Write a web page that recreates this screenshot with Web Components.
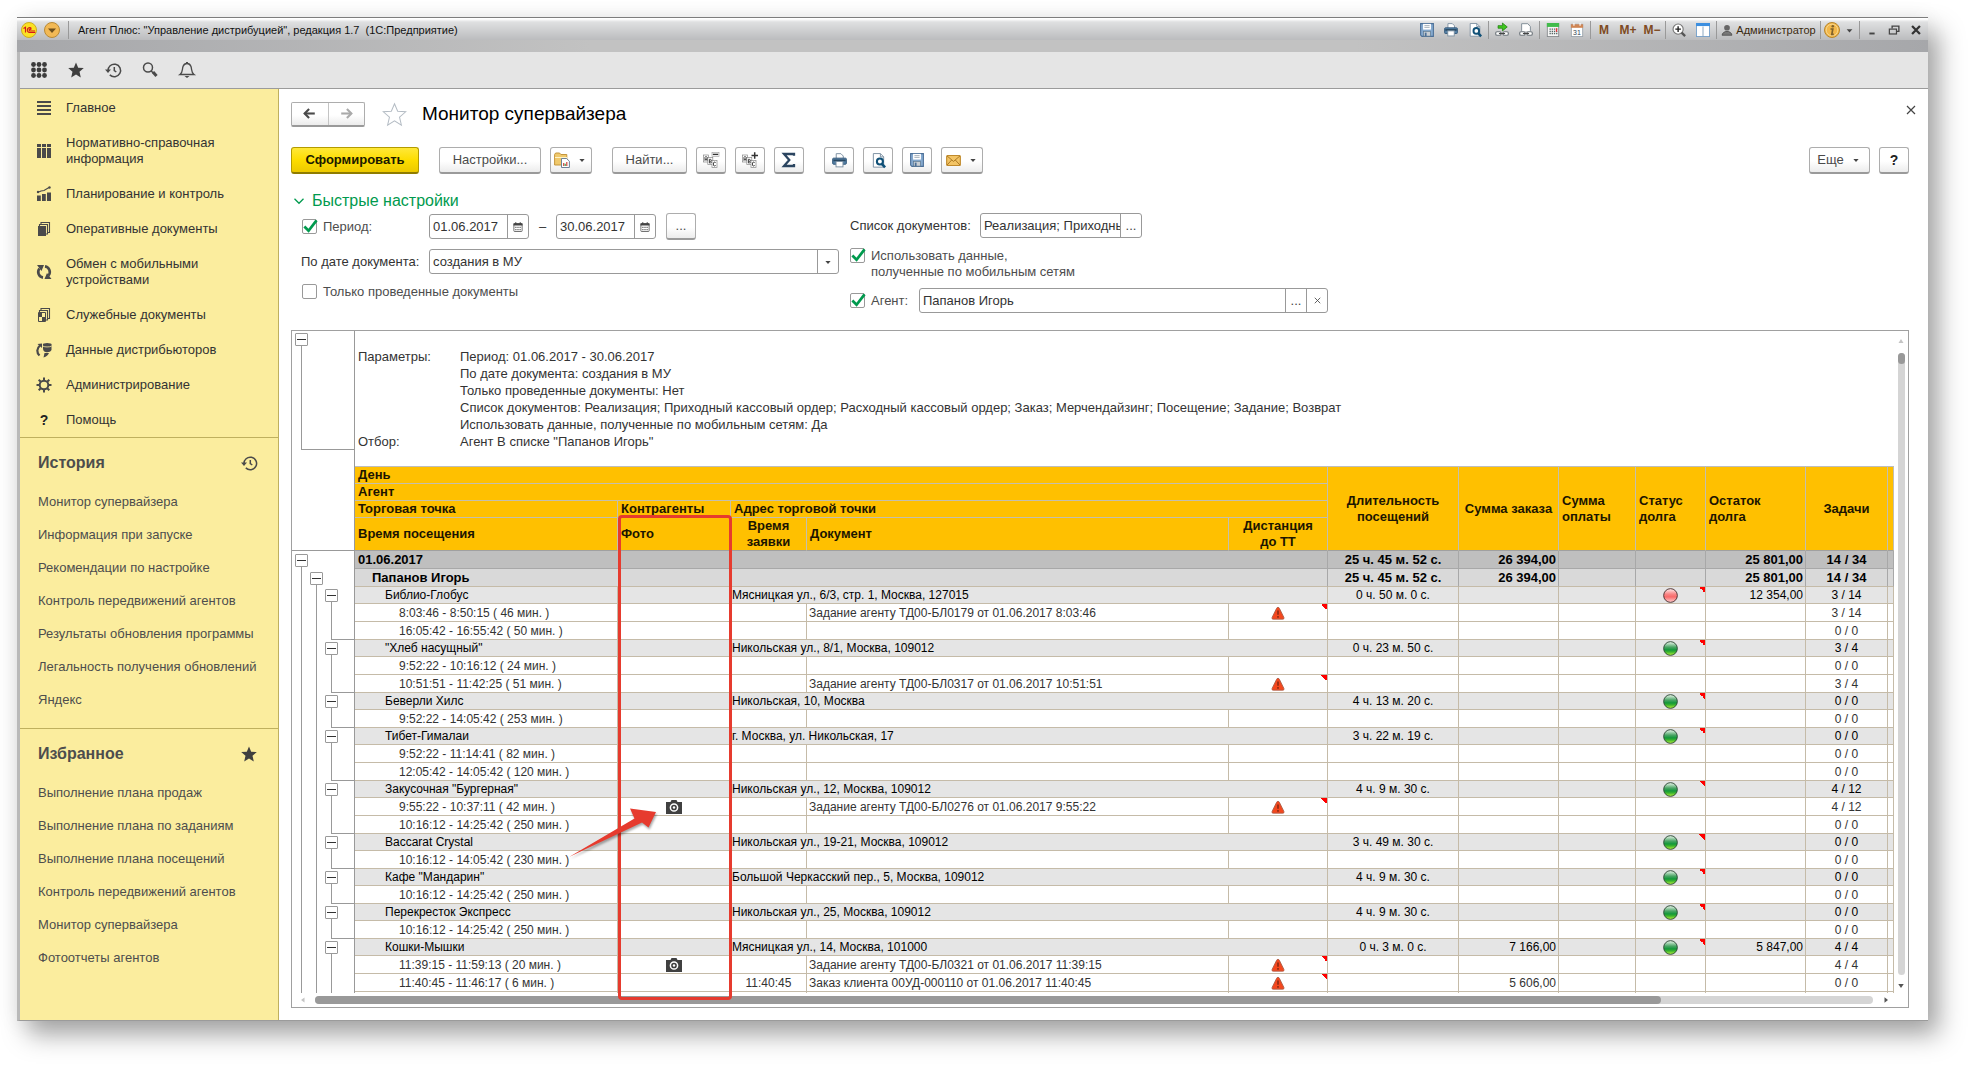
<!DOCTYPE html>
<html lang="ru">
<head>
<meta charset="utf-8">
<title>Монитор супервайзера</title>
<style>
html, body { height: 100%; margin: 0; }
body { background: #fff; font: 13px/16px "Liberation Sans", Arial, sans-serif; color: #333; box-sizing: border-box; padding: 17px 48px 48px 17px; overflow: hidden; }
</style>
</head>
<body>
<app-window></app-window>
<script>
const BASE = `*{box-sizing:border-box} :host{display:block} button,input,select{font:inherit;color:inherit;margin:0} button{padding:0;background:none;border:0;cursor:pointer} a{color:inherit;text-decoration:none} svg{display:block}`;

function define(name, css, html, setup) {
  const tpl = document.createElement('template');
  customElements.define(name, class extends HTMLElement {
    constructor() {
      super();
      this.attachShadow({ mode: 'open' });
    }
    connectedCallback() {
      if (this.shadowRoot.firstChild) return;
      tpl.innerHTML = `<style>${BASE}${css}</style>` + (typeof html === 'function' ? html(this) : html);
      this.shadowRoot.append(tpl.content.cloneNode(true));
      if (setup) setup(this, this.shadowRoot);
    }
  });
}

const G = '#4a4a4a';
const STAR = 'M8 .5l2.2 5.2 5.6.4-4.3 3.7 1.3 5.6L8 12.4l-4.8 3 1.3-5.6L.2 6.1l5.6-.4z';
const HISTORY = `<g fill="none" stroke="${G}" stroke-width="1.5"><path d="M3 9a6.3 6.3 0 1 1 1.8 3.9"/><path d="M9.3 5v3.6l2 1.4"/></g><path d="M0 7.5h6L3 11z" fill="${G}"/>`;
const PRINTER = `<path d="M4.5 6V.7h5L12 3.2V6" fill="#fff" stroke="#7a8ea0"/><rect x=".7" y="5.5" width="14.6" height="6.5" rx="1" fill="#5580a6" stroke="#2f5577"/><rect x="1.5" y="7" width="13" height="1.8" fill="#27465f"/><rect x="4.3" y="9" width="7.4" height="5.8" fill="#fff" stroke="#7a8ea0"/>`;
const CHAIN = y => `<g fill="#fff" stroke="#6f777d" stroke-width="1.3"><rect x=".8" y="${y}" width="6" height="4" rx="1.5"/><rect x="9.2" y="${y}" width="6" height="4" rx="1.5"/></g><path d="M4.5 ${y + 2}h7" stroke="#444" stroke-width="1.3"/>`;
const PAGES = `<path d="M5 3.5V1.5h8.5v10H12M3.5 5V3.5h8V13H10" fill="none" stroke="${G}" stroke-width="1.1"/>`;
const ABC = `<g fill="#fff" stroke="#888" stroke-width=".7"><rect x=".5" y="3" width="5" height="7"/><rect x="4.8" y="5.500" width="5" height="7"/><rect x="9" y="8.500" width="5" height="7"/></g><path d="M2 8.800V5.300l1-1 1 1v3.500M2 7.300h2M6.400 7.300v3.700h1.300l.8-.9-.8-.9.8-.9-.8-1zM6.400 9.200h1.300M12.600 10.800l-.5-.7h-1l-.6.8v2.300l.6.8h1l.5-.7" fill="none" stroke="#333" stroke-width=".9"/>`;
const ICONS = {
  grid: [0,1,2].map(r => [0,1,2].map(c => `<circle cx="${2.5 + c * 5.5}" cy="${2.5 + r * 5.5}" r="2.4" fill="#3c3c3c"/>`).join('')).join(''),
  star: `<path d="${STAR}" fill="#3f3f3f"/>`,
  starline: `<path d="${STAR}" fill="#fff" stroke="#b4bcc4" stroke-width=".7"/>`,
  history: HISTORY,
  search: `<circle cx="6" cy="5.5" r="4.5" fill="none" stroke="${G}" stroke-width="1.5"/><path d="M11 10l3.500 4" stroke="${G}" stroke-width="3"/><path d="M9 8.7l3 3" stroke="${G}" stroke-width="1.5"/>`,
  bell: `<path d="M1 12.5c3-2 2-5 3-8C4.7 2.5 6 1.5 8 1.5s3.3 1 4 3c1 3 0 6 3 8z" fill="none" stroke="${G}" stroke-width="1.3"/><path d="M7 0h2v2H7zM5.5 14h5L8 16z" fill="${G}"/>`,
  lines: `<path d="M1 2h14M1 6h14M1 10h14M1 14h14" stroke="${G}" stroke-width="2"/>`,
  books: `<path d="M1 1h4v3H1zM6 1h4v3H6zM11 1h4v3h-4zM1 5h4v10H1zM6 5h4v10H6zM11 5h4v10h-4z" fill="${G}"/>`,
  chart: `<path d="M1 9.5h3.8V15H1zM6 8h3.8v7H6zM11 6.5h4V15h-4z" fill="${G}"/><path d="M1.5 6.5L5 5l3-.5 5-3" fill="none" stroke="${G}" stroke-width="1.2"/><circle cx="2" cy="6" r="1.2" fill="${G}"/><circle cx="13.5" cy="1.5" r="1.2" fill="${G}"/>`,
  pages: PAGES + `<path d="M2 5h8v10H2z" fill="${G}"/>`,
  sync: `<g fill="none" stroke="${G}" stroke-width="2.6"><path d="M7 13.6A5.6 5.6 0 0 1 3.5 4.5M9 2.4a5.6 5.6 0 0 1 3.5 9.1"/></g><path d="M1 1h7L5.5 7zM15.5 15h-7l2.5-6z" fill="${G}"/>`,
  service: PAGES + `<path d="M2.5 5.5h7v9h-7z" fill="#fbed9e" stroke="${G}"/><path d="M3 6h3v4H3zM6 10h3v4H6z" fill="${G}"/>`,
  data: `<path d="M7 2.5h8.5V8c-1 2-3.5 2.5-6 2C7.5 9.5 7 8 7 6z" fill="${G}"/><ellipse cx="11.2" cy="2.500" rx="4.300" ry="1.500" fill="${G}"/><path d="M7 4.2c2 1 6 1 8.5 0" stroke="#fbed9e" fill="none" stroke-width=".8"/><path d="M4 3.5C.5 6.5.5 10.5 3.5 13.5" fill="none" stroke="${G}" stroke-width="2.2"/><path d="M1.5 2l4.500-.5V6zM7.500 15.500l1-4.500h4.500c-1 2-2.500 3.500-5.500 4.500z" fill="${G}"/>`,
  gear: `<circle cx="8" cy="8" r="4.300" fill="none" stroke="${G}" stroke-width="2"/><path d="M8 .5v3M8 12.5v3M.5 8h3M12.5 8h3M2.7 2.7l2.100 2.100M11.2 11.2l2.100 2.100M2.7 13.300l2.100-2.100M11.2 4.800l2.100-2.100" stroke="${G}" stroke-width="2"/>`,
  save: `<path d="M.7.7h14.6v14.6H2.2L.7 13.8z" fill="#85a9cf" stroke="#4b6f97" stroke-width="1.2"/><rect x="3.5" y="1" width="9" height="6.5" fill="#fff"/><path d="M5 3h6M5 5h6" stroke="#9aa6b0"/><rect x="4" y="9.5" width="8" height="5.5" fill="#c9cfd4" stroke="#5d7890" stroke-width=".8"/><rect x="5.5" y="11" width="2" height="4" fill="#4b6f97"/>`,
  print: PRINTER,
  preview: `<path d="M2.5.6h7.5l3.5 3.5v11h-11z" fill="#fff" stroke="#7a8ea0"/><path d="M10 .6v3.5h3.5" fill="none" stroke="#7a8ea0"/><circle cx="9.5" cy="9" r="3.2" fill="#fff" stroke="#0f5077" stroke-width="2.2"/><path d="M11.8 11.8l3.2 3.5" stroke="#0f5077" stroke-width="2.8"/>`,
  link: CHAIN(10) + `<path d="M3.500 3h5V0l5.500 4.500L8.500 9V6h-5z" fill="#3fc51f" stroke="#187a08" stroke-width=".8"/>`,
  linkdoc: `<path d="M3 9V.8h7L13 4v5" fill="#fff" stroke="#77858f"/>` + CHAIN(10),
  calc: `<rect x="1.5" y=".5" width="13" height="15" fill="#f5f5f5" stroke="#85898c"/><rect x="1" y="0" width="14" height="4.5" fill="#41bb4b"/><path d="M4 7h9M4 9.5h9M4 12h9" stroke="#566" stroke-width="1.5" stroke-dasharray="1.5 1"/><path d="M12 6v4" stroke="#e33" stroke-width="1.5"/>`,
  calendar: `<rect x="1.5" y="1.5" width="13" height="14" fill="#fff" stroke="#9aa3ab"/><path d="M1 1.5h14v4H1z" fill="#cf8554"/><path d="M4.5 0v3M11.5 0v3" stroke="#fff" stroke-width="1.3"/><text x="8" y="13.5" font-family="Liberation Sans" font-size="8" text-anchor="middle" fill="#345">31</text>`,
  zoomin: `<circle cx="7" cy="7" r="5.800" fill="#fff" stroke="#777" stroke-width="1.300"/><path d="M7 3.8v6.4M3.8 7h6.4" stroke="#222" stroke-width="1.6"/><path d="M11 11l4 4" stroke="#555" stroke-width="2.6"/>`,
  panels: `<rect x=".5" y=".5" width="15" height="15" fill="#fff" stroke="#6f9cc8"/><rect width="16" height="3.5" fill="#3c8fe0"/><path d="M8 4v11.5" stroke="#7f9db9"/>`,
  user: `<circle cx="8" cy="5" r="3.8" fill="#666"/><path d="M1.5 15c0-3 2.5-4 4.5-5h4c2 1 4.5 2 4.5 5z" fill="#777" stroke="#444"/>`,
  info: `<circle cx="8" cy="8" r="7.5" fill="#f2b84b" stroke="#b8862c"/><circle cx="8" cy="8" r="5.8" fill="none" stroke="#fadc98" stroke-width=".8"/><circle cx="8.8" cy="4.3" r="1.3" fill="#80622c"/><path d="M6.5 7h2.3l-1 5.3h2" stroke="#80622c" stroke-width="1.7" fill="none"/>`,
  min: `<path d="M5 12h6" stroke="#444" stroke-width="2.2"/>`,
  restore: `<path d="M5.5 6V2.8h9v7h-2.5" fill="none" stroke="#444" stroke-width="1.8"/><rect x="1.8" y="6.8" width="9.5" height="6.5" fill="none" stroke="#444" stroke-width="1.6"/>`,
  close: `<path d="M3.5 3.5l9 9M12.5 3.5l-9 9" stroke="#333" stroke-width="2.6"/>`,
  thinclose: `<path d="M4 4l8 8M12 4l-8 8" stroke="#444" stroke-width="1.2"/>`,
  tri: `<path d="M4.5 6.5h7L8 10.5z" fill="#444"/>`,
  logo: `<circle cx="8" cy="8" r="7.5" fill="#fbe122" stroke="#cdae20"/><path d="M2.5 6.5L4.5 5.3V10.5M10.5 6.5C9 4.7 6.3 5.8 6.3 8c0 2 1.7 2.6 3 2.5h5M10.3 7.6c-1-.9-2.2-.5-2.2.4 0 .7.6 1 1.4 1h4.5" stroke="#d3171c" fill="none" stroke-width="1.1"/>`,
  menu: `<circle cx="8" cy="8" r="7.5" fill="#f2b955" stroke="#b98a35"/><path d="M4 6.5h8L8 11z" fill="#6d4f1d"/>`,
  back: `<path d="M2 8h12.5" stroke="#4a4a4a" stroke-width="2.6"/><path d="M7.5 2.5L2 8l5.500 5.500" fill="none" stroke="#4a4a4a" stroke-width="2.6"/>`,
  forward: `<path d="M1.5 8H14" stroke="#aaa" stroke-width="2.6"/><path d="M8.5 2.5L14 8l-5.500 5.500" fill="none" stroke="#aaa" stroke-width="2.6"/>`,
  folder: `<path d="M.6 13V2.5l1-1.5h4l1.2 1.5h6V13z" fill="#f0c96c" stroke="#c5963c"/><path d="M1 5.5h12" stroke="#fff3c8"/><path d="M7.5 6.5h5l2.9 2.7v6.3H7.5z" fill="#fff" stroke="#6d8297"/><path d="M9.7 14v-3M12.8 14v-4" stroke="#d2483f" stroke-width="1.2"/><path d="M11.2 14v-2.2" stroke="#3a9d4b" stroke-width="1.2"/>`,
  abcminus: ABC + `<rect x="9" y=".5" width="7" height="3.800" fill="#fff" stroke="#999" stroke-width=".6"/><path d="M9.800 2.400h5.400" stroke="#333" stroke-width="1.400"/>`,
  abcplus: ABC + `<path d="M9.500 3.500h6.500M12.700.3v6.400" stroke="#333" stroke-width="1.500"/>`,
  sigma: `<path d="M13 3.8V2H3l5.3 6L3 14h10v-2" fill="none" stroke="#2b4560" stroke-width="2.3"/>`,
  mail: `<rect x=".7" y="2.7" width="14.6" height="10.6" rx="1" fill="#f3c465" stroke="#c08a2c" stroke-width="1.2"/><path d="M1 3l7 6 7-6M1 13l5-5.5M15 13l-5-5.5" fill="none" stroke="#a87420"/>`,
  chevron: `<path d="M2 5l6 6 6-6" fill="none" stroke="#009a4e" stroke-width="1.7"/>`,
  cal: `<rect x="2.5" y="3.5" width="11" height="10.5" rx="1" fill="#fff" stroke="#444"/><path d="M2 3h12v3H2z" fill="#444"/><path d="M5 1.5v3M11 1.5v3" stroke="#444" stroke-width="1.5"/><path d="M4.5 8.5h7.5M4.5 11.5h7.5" stroke="#444" stroke-width="1.4" stroke-dasharray="1.4 1.4"/>`,
  camera: `<path d="M0 3h4.5l1-2h5l1 2H16v12H0z" fill="#404040"/><circle cx="8" cy="8.5" r="3.6" fill="none" stroke="#fff" stroke-width="1.5"/><circle cx="8" cy="8.5" r="1.2" fill="#fff"/>`,
  warn: `<path d="M8 1.5c.8 0 1.2.5 1.6 1.2L14.7 13c.6 1.2 0 2-1.2 2h-11c-1.2 0-1.8-.8-1.2-2L6.4 2.7C6.800 2 7.200 1.500 8 1.500z" fill="#f5471d" stroke="#a85a45" stroke-width="1"/><path d="M8 5v5M8 11.500v2" stroke="#7a2412" stroke-width="1.600"/>`,
  green: `<defs><linearGradient id="g" x2="0" y2="1"><stop offset="0" stop-color="#f2faf3"/><stop offset=".4" stop-color="#4aa565"/><stop offset=".6" stop-color="#12983a"/><stop offset=".75" stop-color="#3ab22e"/><stop offset="1" stop-color="#b8f53a"/></linearGradient></defs><circle cx="8" cy="8" r="7.300" fill="url(#g)" stroke="#2c4a34"/>`,
  red: `<defs><linearGradient id="r" x2="0" y2="1"><stop offset="0" stop-color="#fff0f0"/><stop offset=".4" stop-color="#f98585"/><stop offset=".6" stop-color="#f86a6a"/><stop offset="1" stop-color="#ffd0d0"/></linearGradient></defs><circle cx="8" cy="8" r="7.300" fill="url(#r)" stroke="#4a3030"/>`,
  check: `<path d="M2.5 8L7 12.5 15.5 1.5" fill="none" stroke="#009a4e" stroke-width="2.9"/>`,
  up: `<path d="M3 12l5-8 5 8z" fill="#c4c4c4"/>`, down: `<path d="M2.5 4h11L8 12z" fill="#555"/>`,
  left: `<path d="M11 3v10L4 8z" fill="#c4c4c4"/>`, right: `<path d="M5 2.5v11L12 8z" fill="#555"/>`
};

define('ui-icon', `:host{display:block;flex:none} svg{overflow:visible}`, el => {
  const s = el.getAttribute('size') || 16;
  return `<svg width="${s}" height="${s}" viewBox="0 0 16 16" aria-hidden="true">${ICONS[el.getAttribute('name')]}</svg>`;
});
const icon = (n, s = 16) => `<ui-icon name="${n}" size="${s}"></ui-icon>`;

define('tool-button', `
  :host{display:block;flex:none}
  button{display:flex;align-items:center;justify-content:center;gap:6px;width:100%;height:27px;border:1px solid #adadad;border-bottom:2px solid #9a9a9a;border-radius:3px;background:linear-gradient(#fff 55%,#ececec);color:#4a4a4a}
  :host([primary]) button{background:linear-gradient(#ffe838,#fddd00 50%,#ecc900);border-color:#b39b00;border-bottom-color:#8f7c00;color:#1a1a00;font-weight:bold}
`, el => `<button type="button" aria-label="${el.getAttribute('label') || ''}"><slot></slot>${el.hasAttribute('menu') ? icon('tri', 12) : ''}</button>`, (el, root) => {
  if (!el.hasAttribute('label')) root.querySelector('button').removeAttribute('aria-label');
});

define('check-box', `
  label{display:flex;align-items:flex-start;gap:6px;color:#4d4d4d}
  .box{display:grid;flex:none;width:15px;height:15px}
  .box>*{grid-area:1/1}
  input{appearance:none;width:15px;height:15px;border:1px solid #999;border-radius:2px;background:#fff}
  ui-icon{display:none;pointer-events:none}
  input:checked+ui-icon{display:block}
`, el => `<label><span class="box"><input type="checkbox" ${el.hasAttribute('checked') ? 'checked' : ''}>${icon('check', 15)}</span><span><slot></slot></span></label>`);

define('text-field', `
  :host{display:flex;align-items:center;min-width:0}
  label{flex:none}
  label:empty{display:none}
  .f{display:flex;flex:1;min-width:0;height:25px;border:1px solid #999;border-radius:3px;background:#fff;overflow:hidden}
  input,select{flex:1;min-width:0;width:0;border:0;outline:0;background:none;padding:0 0 0 3px;height:23px;color:#333;appearance:none}
  button,.arrow{flex:none;width:21px;border-left:1px solid #999;display:flex;align-items:center;justify-content:center;color:#444}
  .sel{display:grid;flex:1}
  .sel>*{grid-area:1/1}
  .sel select{width:100%}
  .arrow{justify-self:end;pointer-events:none}
`, el => {
  const v = el.getAttribute('value'), l = el.getAttribute('label') || '', a = el.getAttribute('aria') || l;
  const core = el.getAttribute('type') === 'select'
    ? `<div class="sel"><select id="c" aria-label="${a}"><option>${v}</option></select><span class="arrow">${icon('tri', 12)}</span></div>`
    : `<input id="c" type="text" value="${v}" aria-label="${a}">`;
  const btns = (el.getAttribute('buttons') || '').split(' ').filter(Boolean).map(b =>
    b === 'cal' ? `<button type="button" aria-label="Календарь">${icon('cal', 12)}</button>` :
    b === 'x' ? `<button type="button" aria-label="Очистить">${icon('thinclose', 11)}</button>` :
    `<button type="button" aria-label="Выбрать">...</button>`).join('');
  return `<label for="c" style="width:${el.getAttribute('label-width') || 0}px">${l}</label><div class="f">${core}${btns}</div>`;
});

define('title-bar', `
  :host{background:linear-gradient(90deg,#a6a7aa,#c2c2c2 30%,#c2c2c2 70%,#a6a7aa);border-top:1px solid #7d7d7d}
  .bar{display:flex;align-items:center;height:22px;padding:2px 1px 0 4px;background:linear-gradient(#fff 0,#fff 1px,#dfe0e1 4px,#bbbcbe)}
  .under{height:12px}
  button{display:flex;align-items:center;justify-content:center;height:18px}
  .t{width:24px} .w{width:22px}
  .sep{width:1px;height:18px;margin:0 1px;background:#999;align-self:flex-start}
  .left{display:flex;align-items:center;gap:7px}
  .title{flex:1;padding-left:8px;font-size:11px;line-height:18px;color:#111;white-space:nowrap}
  .right{display:flex;align-items:center}
  .m{font-weight:bold;color:#7e4a22;font-size:12px}
  .user{width:101px;gap:3px;font-size:11px;line-height:18px;color:#3a2a10}
  .info{width:36px;gap:3px}
`, () => {
  const t = n => `<button type="button" class="t" aria-label="${n}">${icon(n, 14)}</button>`, s = '<span class="sep"></span>';
  return `<div class="bar"><div class="left"><button type="button" aria-label="1С">${icon('logo', 16)}</button><button type="button" aria-label="Меню">${icon('menu', 16)}</button><span class="sep"></span></div>
  <div class="title">Агент Плюс: "Управление дистрибуцией", редакция 1.7&nbsp; (1С:Предприятие)</div>
  <div class="right">${t('save')}${t('print')}${t('preview')}${s}${t('link')}${t('linkdoc')}${s}${t('calc')}${t('calendar')}${s}
  <button type="button" class="t m">M</button><button type="button" class="t m">M+</button><button type="button" class="t m">M−</button>${s}${t('zoomin')}${t('panels')}${s}
  <button type="button" class="user">${icon('user', 12)}Администратор</button>${s}<button type="button" class="info" aria-label="Справка">${icon('info', 16)}${icon('tri', 13)}</button>${s}
  <button type="button" class="w" aria-label="Свернуть">${icon('min', 14)}</button><button type="button" class="w" aria-label="Восстановить">${icon('restore', 12)}</button><button type="button" class="w" aria-label="Закрыть">${icon('close', 14)}</button></div></div><div class="under"></div>`;
});

define('quick-bar', `
  :host{display:flex;align-items:center;height:37px;background:#e5e5e5;border-bottom:1px solid #9b9b9b}
  button{display:flex;align-items:center;justify-content:center;width:37px;height:30px}
`, () => ['grid', 'star', 'history', 'search', 'bell'].map(n => `<button type="button" aria-label="${n}">${icon(n, 16)}</button>`).join(''));

const MENU = [['lines', 'Главное'], ['books', 'Нормативно-справочная информация'], ['chart', 'Планирование и контроль'], ['pages', 'Оперативные документы'], ['sync', 'Обмен с мобильными устройствами'], ['service', 'Служебные документы'], ['data', 'Данные дистрибьюторов'], ['gear', 'Администрирование'], ['', 'Помощь']];

define('side-menu', `
  :host{padding-top:1px;border-bottom:1px solid #bfb05e}
  a{display:flex;align-items:center;padding:10px 40px 9px 16px;gap:14px}
  .q{flex:none;width:16px;text-align:center;font-weight:bold;font-size:14px;color:#222}
`, () => `<nav>` + MENU.map(([n, t]) => `<a href="#">${n ? icon(n, 16) : '<span class="q">?</span>'}<span>${t}</span></a>`).join('') + `</nav>`);

define('side-section', `
  :host{border-bottom:1px solid #bfb05e;padding:16px 21px 12px 18px;color:#4d4d4d}
  :host(:last-of-type){border-bottom:0}
  header{display:flex;justify-content:space-between;align-items:center;padding-bottom:13px}
  h2{margin:0;font-size:16px;line-height:18px;font-weight:bold}
  ::slotted(a){display:block;line-height:33px;color:inherit;text-decoration:none;white-space:nowrap}
`, el => `<header><h2>${el.getAttribute('heading')}</h2>${icon(el.getAttribute('icon'), 16)}</header><nav><slot></slot></nav>`);

const HIST = ['Монитор супервайзера', 'Информация при запуске', 'Рекомендации по настройке', 'Контроль передвижений агентов', 'Результаты обновления программы', 'Легальность получения обновлений', 'Яндекс'];
const FAV = ['Выполнение плана продаж', 'Выполнение плана по заданиям', 'Выполнение плана посещений', 'Контроль передвижений агентов', 'Монитор супервайзера', 'Фотоотчеты агентов'];
const links = a => a.map(t => `<a href="#">${t}</a>`).join('');

define('side-bar', `:host{width:259px;flex:none;background:#fbed9e;border-right:1px solid #bfb05e}`,
  `<side-menu></side-menu><side-section heading="История" icon="history">${links(HIST)}</side-section><side-section heading="Избранное" icon="star">${links(FAV)}</side-section>`);

define('form-header', `
  :host{display:flex;align-items:center;height:26px}
  .nav{display:flex;width:74px;height:25px;border:1px solid #adadad;border-bottom:2px solid #9a9a9a;border-radius:2px;background:linear-gradient(#fff 55%,#ececec)}
  .nav button{flex:1;display:flex;align-items:center;justify-content:center}
  .nav button+button{border-left:1px solid #c4c4c4}
  .fav{margin:0 16px 0 18px}
  h1{flex:1;margin:0;font-size:19px;line-height:24px;font-weight:normal;color:#000}
  .x{margin-right:-10px;align-self:flex-start;padding-top:1px}
`, `<div class="nav"><button type="button" aria-label="Назад">${icon('back', 13)}</button><button type="button" aria-label="Вперед">${icon('forward', 13)}</button></div>
  <button type="button" class="fav" aria-label="В избранное">${icon('starline', 23)}</button><h1>Монитор супервайзера</h1><button type="button" class="x" aria-label="Закрыть">${icon('thinclose', 16)}</button>`);

define('form-toolbar', `
  :host{display:flex;gap:9px}
  .i{width:30px} .d{width:42px} .gap{margin-left:11px} .push{margin-left:auto}
  .go{width:128px} .set{width:102px} .find{width:75px} .more{width:61px}
  b{font-size:14px;color:#222}
`, `<tool-button primary class="go">Сформировать</tool-button>
  <tool-button class="set gap">Настройки...</tool-button><tool-button class="d" menu label="Варианты">${icon('folder', 16)}</tool-button>
  <tool-button class="find gap">Найти...</tool-button><tool-button class="i" label="Свернуть группы">${icon('abcminus', 16)}</tool-button><tool-button class="i" label="Развернуть группы">${icon('abcplus', 16)}</tool-button><tool-button class="i" label="Сумма">${icon('sigma', 16)}</tool-button>
  <tool-button class="i gap" label="Печать">${icon('print', 15)}</tool-button><tool-button class="i" label="Просмотр">${icon('preview', 15)}</tool-button><tool-button class="i" label="Сохранить">${icon('save', 14)}</tool-button><tool-button class="d" menu label="Отправить">${icon('mail', 15)}</tool-button>
  <tool-button class="more push" menu>Еще</tool-button><tool-button class="i"><b>?</b></tool-button>`);

define('quick-settings', `
  h2{display:flex;align-items:center;gap:7px;margin:0 0 3px 2px;font-size:16px;line-height:18px;font-weight:normal;color:#009a4e}
  .cols{display:flex;gap:11px;padding-left:10px}
  .l{width:538px;padding-top:1px} .r{width:478px}
  .l,.r{display:flex;flex-direction:column}
  .row{display:flex;align-items:center;height:25px;margin-bottom:10px}
  .period{width:128px;padding-left:1px}
  .date{width:100px} .dash{width:27px;text-align:center} .dots{width:30px;margin-left:10px}
  .wide{flex:1}
  .docs{width:292px}
  .two{height:32px;margin-bottom:8px}
  .only{padding-left:1px}
  .agent{width:69px}
`, `<h2>${icon('chevron', 12)}Быстрые настройки</h2>
  <div class="cols"><div class="l">
    <div class="row"><check-box checked class="period">Период:</check-box><text-field class="date" value="01.06.2017" aria="Начало периода" buttons="cal"></text-field><span class="dash">–</span><text-field class="date" value="30.06.2017" aria="Конец периода" buttons="cal"></text-field><tool-button class="dots">...</tool-button></div>
    <div class="row"><text-field class="wide" type="select" label="По дате документа:" label-width="128" value="создания в МУ"></text-field></div>
    <check-box class="only">Только проведенные документы</check-box>
  </div><div class="r">
    <div class="row"><text-field class="docs" label="Список документов:" label-width="130" value="Реализация; Приходный кассовый ордер" buttons="dots"></text-field></div>
    <check-box checked class="two">Использовать данные,<br>полученные по мобильным сетям</check-box>
    <div class="row"><check-box checked class="agent">Агент:</check-box><text-field class="wide" value="Папанов Игорь" aria="Агент" buttons="dots x"></text-field></div>
  </div></div>`);

const POINTS = [
  ['Библио-Глобус', 'Мясницкая ул., 6/3, стр. 1, Москва, 127015', '0 ч. 50 м. 0 с.', '', 'red', '12 354,00', '3 / 14', [['8:03:46 - 8:50:15 ( 46 мин. )', 0, '', 'Задание агенту ТД00-БЛ0179 от 01.06.2017 8:03:46', '', '3 / 14'], ['16:05:42 - 16:55:42 ( 50 мин. )', 0, '', '', '', '0 / 0']]],
  ['"Хлеб насущный"', 'Никольская ул., 8/1, Москва, 109012', '0 ч. 23 м. 50 с.', '', 'green', '', '3 / 4', [['9:52:22 - 10:16:12 ( 24 мин. )', 0, '', '', '', '0 / 0'], ['10:51:51 - 11:42:25 ( 51 мин. )', 0, '', 'Задание агенту ТД00-БЛ0317 от 01.06.2017 10:51:51', '', '3 / 4']]],
  ['Беверли Хилс', 'Никольская, 10, Москва', '4 ч. 13 м. 20 с.', '', 'green', '', '0 / 0', [['9:52:22 - 14:05:42 ( 253 мин. )', 0, '', '', '', '0 / 0']]],
  ['Тибет-Гималаи', 'г. Москва, ул. Никольская, 17', '3 ч. 22 м. 19 с.', '', 'green', '', '0 / 0', [['9:52:22 - 11:14:41 ( 82 мин. )', 0, '', '', '', '0 / 0'], ['12:05:42 - 14:05:42 ( 120 мин. )', 0, '', '', '', '0 / 0']]],
  ['Закусочная "Бургерная"', 'Никольская ул., 12, Москва, 109012', '4 ч. 9 м. 30 с.', '', 'green', '', '4 / 12', [['9:55:22 - 10:37:11 ( 42 мин. )', 1, '', 'Задание агенту ТД00-БЛ0276 от 01.06.2017 9:55:22', '', '4 / 12'], ['10:16:12 - 14:25:42 ( 250 мин. )', 0, '', '', '', '0 / 0']]],
  ['Baccarat Crystal', 'Никольская ул., 19-21, Москва, 109012', '3 ч. 49 м. 30 с.', '', 'green', '', '0 / 0', [['10:16:12 - 14:05:42 ( 230 мин. )', 0, '', '', '', '0 / 0']]],
  ['Кафе "Мандарин"', 'Большой Черкасский пер., 5, Москва, 109012', '4 ч. 9 м. 30 с.', '', 'green', '', '0 / 0', [['10:16:12 - 14:25:42 ( 250 мин. )', 0, '', '', '', '0 / 0']]],
  ['Перекресток Экспресс', 'Никольская ул., 25, Москва, 109012', '4 ч. 9 м. 30 с.', '', 'green', '', '0 / 0', [['10:16:12 - 14:25:42 ( 250 мин. )', 0, '', '', '', '0 / 0']]],
  ['Кошки-Мышки', 'Мясницкая ул., 14, Москва, 101000', '0 ч. 3 м. 0 с.', '7 166,00', 'green', '5 847,00', '4 / 4', [['11:39:15 - 11:59:13 ( 20 мин. )', 1, '', 'Задание агенту ТД00-БЛ0321 от 01.06.2017 11:39:15', '', '4 / 4'], ['11:40:45 - 11:46:17 ( 6 мин. )', 0, '11:40:45', 'Заказ клиента 00УД-000110 от 01.06.2017 11:40:45', '5 606,00', '0 / 0'], ['', 0, '', '', '', '']]]
];
const BOX = '<button type="button" class="box" aria-label="Свернуть группу"></button>';

function bodyRows() {
  const total = (cls, name) => `<tr class="${cls}"><td class="tree">${BOX}</td><td colspan="5">${name}</td><td class="c">25 ч. 45 м. 52 с.</td><td class="n">26 394,00</td><td></td><td></td><td class="n">25 801,00</td><td class="c">14 / 34</td><td></td></tr>`;
  return total('day', '01.06.2017') + total('agent', 'Папанов Игорь') + POINTS.map(([name, addr, dur, sum, st, rest, tasks, visits], pi) =>
    `<tr class="point"><td class="tree">${BOX}</td><td>${name}</td><td></td><td colspan="3" class="addr">${addr}</td><td class="c">${dur}</td><td class="n">${sum}</td><td></td><td class="ic note">${icon(st, 15)}</td><td class="n">${rest}</td><td class="c">${tasks}</td><td></td></tr>` +
    visits.map(([time, cam, at, doc, s, t], i) => `<tr class="visit ${i === visits.length - 1 && pi < POINTS.length - 1 ? 'end' : ''}"><td class="tree"></td><td>${time}</td><td class="ic">${cam ? icon('camera', 16) : ''}</td><td class="c">${at}</td><td class="doc">${doc}</td><td class="ic ${doc ? 'note' : ''}">${doc ? icon('warn', 14) : ''}</td><td></td><td class="n">${s}</td><td></td><td></td><td></td><td class="c">${t}</td><td></td></tr>`).join('')
  ).join('');
}

define('report-table', `
  table{width:100%;table-layout:fixed;border-collapse:separate;border-spacing:0;font-size:12px;line-height:16px}
  td,th{padding:0 3px;border:solid #c5bba8;border-width:0 1px 1px 0;white-space:nowrap;text-align:left;vertical-align:middle;overflow:hidden}
  td{height:18px}
  th{background:#ffc000;border-color:#c4bfae;color:#1c1500;font-size:13px;font-weight:bold;height:17px;white-space:normal}
  thead tr:first-child th{border-top:1px solid #bdbdbd}
  thead .b{border-bottom-color:#a0a0a0}
  .c{text-align:center}
  td.n{text-align:right;padding-right:2px}
  .tree{padding:0;border-color:#999;border-bottom:0}
  thead tr:first-child .tree{background:#fff;border-top:0;border-bottom:1px solid #999;border-right-color:#999}
  .day td:not(.tree){background:#bfbfbf;border-color:#a8a8a8;font-size:13px;font-weight:bold;color:#000}
  .agent td:not(.tree){background:#d9d9d9;border-color:#a8a8a8;border-bottom-color:#c5bba8;font-size:13px;font-weight:bold;color:#000}
  .agent td:nth-child(2){padding-left:17px}
  .point td{height:17px;color:#000}
  .point td:not(.tree){background-color:#e5e5e5}
  .point td:nth-child(2){padding-left:30px}
  .visit td:nth-child(2){padding-left:44px}
  td.addr{padding-left:1px}
  td.doc{padding-left:2px}
  td.ic{padding:0}
  .ic ui-icon{width:max-content;margin:0 auto}
  .ic.note{background-image:linear-gradient(to top right,transparent 50%,#f00 50%);background-size:6px 6px;background-position:100% 0;background-repeat:no-repeat}
  .box{display:block;width:13px;height:13px;border:1px solid #999;border-radius:1px;background:linear-gradient(#333,#333) 50% 50%/9px 1px no-repeat #fff}
  .day .box{margin-left:3px}
  .agent .box{margin-left:18px}
  .point .box{margin-left:33px}
  tbody{--g:linear-gradient(#999,#999)}
  .day .tree{background:var(--g) 9px 100%/1px 5px no-repeat}
  .agent .tree{background:var(--g) 9px 0/1px 100% no-repeat,var(--g) 24px 100%/1px 5px no-repeat}
  .point .tree{background:var(--g) 9px 0/1px 100% no-repeat,var(--g) 24px 0/1px 100% no-repeat,var(--g) 39px 100%/1px 5px no-repeat}
  .visit .tree{background:var(--g) 9px 0/1px 100% no-repeat,var(--g) 24px 0/1px 100% no-repeat,var(--g) 39px 0/1px 100% no-repeat}
  .visit.end .tree{background:var(--g) 9px 0/1px 100% no-repeat,var(--g) 24px 0/1px 100% no-repeat,var(--g) 39px 0/1px 100% no-repeat,var(--g) 100% 100%/23px 1px no-repeat}
`, () => `<table><colgroup>${[63, 263, 113, 76, 0, 99, 131, 100, 77, 70, 100, 82, 6].map(w => w ? `<col style="width:${w}px">` : '<col>').join('')}</colgroup>
  <thead><tr><th rowspan="4" class="tree"></th><th colspan="5">День</th><th rowspan="4" class="c b">Длительность посещений</th><th rowspan="4" class="c b">Сумма заказа</th><th rowspan="4" class="b">Сумма оплаты</th><th rowspan="4" class="b">Статус<br>долга</th><th rowspan="4" class="b">Остаток<br>долга</th><th rowspan="4" class="c b">Задачи</th><th rowspan="4" class="b"></th></tr>
  <tr><th colspan="5">Агент</th></tr><tr><th>Торговая точка</th><th>Контрагенты</th><th colspan="3">Адрес торговой точки</th></tr>
  <tr><th class="b">Время посещения</th><th class="b">Фото</th><th class="c b">Время заявки</th><th class="b">Документ</th><th class="c b">Дистанция<br>до ТТ</th></tr></thead>
  <tbody>${bodyRows()}</tbody></table>`);

define('report-params', `
  :host{display:flex;height:135px}
  .tree{width:63px;flex:none;border-right:1px solid #999;padding:2px 0 16px 3px;display:flex;flex-direction:column}
  .box{flex:none;width:13px;height:13px;border:1px solid #999;border-radius:1px;background:linear-gradient(#333,#333) 50% 50%/9px 1px no-repeat #fff}
  .line{flex:1;margin-left:6px;border:solid #999;border-width:0 0 1px 1px}
  dl{display:grid;grid-template-columns:102px auto;margin:0;padding:17px 0 0 3px;line-height:17px;align-content:start;white-space:nowrap}
  dd{margin:0}
`, `<div class="tree">${BOX}<div class="line"></div></div><dl><dt>Параметры:</dt><dd>Период: 01.06.2017 - 30.06.2017<br>По дате документа: создания в МУ<br>Только проведенные документы: Нет<br>Список документов: Реализация; Приходный кассовый ордер; Расходный кассовый ордер; Заказ; Мерчендайзинг; Посещение; Задание; Возврат<br>Использовать данные, полученные по мобильным сетям: Да</dd><dt>Отбор:</dt><dd>Агент В списке "Папанов Игорь"</dd></dl>`);

define('scroll-strip', `
  :host{display:flex;flex:none;align-items:center}
  :host([dir=v]){flex-direction:column;width:14px;padding:6px 0 3px}
  :host([dir=h]){height:14px;padding:0 18px 0 7px}
  .track{flex:1;background:#d5d5d5;border-radius:4px;display:flex}
  .thumb{background:#999;border-radius:4px}
  :host([dir=v]) .track{width:7px;margin:8px 0 7px;flex-direction:column}
  :host([dir=v]) .thumb{height:11px}
  :host([dir=h]) .track{height:8px;margin:0 9px 0 8px}
  :host([dir=h]) .thumb{width:86.4%}
`, el => el.getAttribute('dir') === 'v' ? `${icon('up', 8)}<div class="track"><div class="thumb"></div></div>${icon('down', 8)}` : `${icon('left', 8)}<div class="track"><div class="thumb"></div></div>${icon('right', 8)}`);

define('report-sheet', `
  :host{display:flex;flex-direction:column;position:relative;border:1px solid #a0a0a0;min-height:0}
  .top{display:flex;flex:1;min-height:0}
  .view{flex:1;min-width:0;overflow:hidden}
  .mark{position:absolute;left:326px;top:184px;width:114px;height:485px;border:3px solid #e63b2e;border-radius:4px;pointer-events:none}
  .arrow{position:absolute;left:274px;top:474px;pointer-events:none;filter:drop-shadow(1px 2px 1px rgba(0,0,0,.35))}
`, `<div class="top"><div class="view"><report-params></report-params><report-table></report-table></div><scroll-strip dir="v"></scroll-strip></div><scroll-strip dir="h"></scroll-strip>
  <div class="mark"></div><svg class="arrow" width="90" height="60" viewBox="0 0 90 60" aria-hidden="true"><path d="M3 52L68.500 13.500 64 3.500l26 3.500L82.500 22.500l-6.500-5z" fill="#e63b2e"/></svg>`);

define('report-form', `
  :host{display:flex;flex-direction:column;flex:1;min-width:0;background:#fff;padding:12px 19px 12px 12px}
  form-toolbar{margin:20px 0 18px}
  report-sheet{flex:1;margin-top:7px}
`, `<form-header></form-header><form-toolbar></form-toolbar><quick-settings></quick-settings><report-sheet></report-sheet>`);

define('app-window', `
  :host{display:flex;flex-direction:column;height:100%;background:#fff;box-shadow:11px 14px 24px rgba(0,0,0,.34),0 2px 22px rgba(0,0,0,.07)}
  .body{display:flex;flex-direction:column;flex:1;min-height:0;border-left:3px solid #b9b9b9;border-bottom:1px solid #9b9b9b}
  .main{display:flex;flex:1;min-height:0}
`, `<title-bar></title-bar><div class="body"><quick-bar></quick-bar><div class="main"><side-bar></side-bar><report-form></report-form></div></div>`);
</script>
</body>
</html>
